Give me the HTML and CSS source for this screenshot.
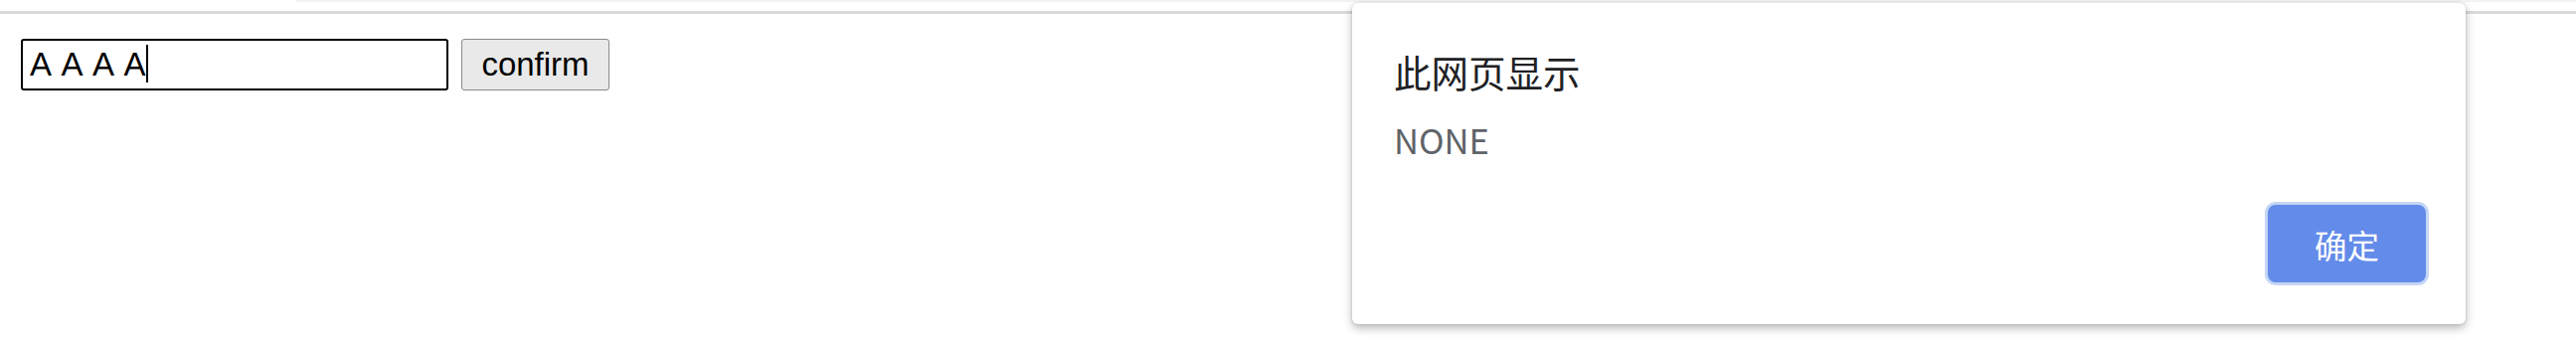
FILE: index.html
```html
<!DOCTYPE html>
<html lang="zh-CN">
<head>
<meta charset="utf-8">
<title>confirm</title>
<link rel="stylesheet" href="styles.css">
</head>
<body>
<div class="chrome">
  <div class="tabstrip"></div>
  <div class="divider"></div>
</div>
<div class="form">
  <div class="field"><span class="value">A A A A</span><span class="caret"></span></div>
  <button class="confirm" type="button">confirm</button>
</div>
<div class="dialog" role="alertdialog">
  <div class="title">此网页显示</div>
  <div class="message">NONE</div>
  <div class="actions">
    <button class="ok" type="button">确定</button>
  </div>
</div>
</body>
</html>
```
FILE: styles.css
```css
html, body {
  margin: 0;
  padding: 0;
  background: #ffffff;
  width: 2591px;
  height: 345px;
  overflow: hidden;
}

.chrome {
  display: flex;
  flex-direction: column;
}

.tabstrip {
  height: 2px;
  margin-left: 298px;
  background: #f2f2f2;
}

.divider {
  margin-top: 9px;
  height: 3px;
  background: #dadada;
}

.form {
  display: flex;
  align-items: flex-start;
  gap: 13px;
  padding: 25px 0 0 21px;
}

.field {
  box-sizing: border-box;
  width: 430px;
  height: 52px;
  border: 2px solid #000;
  border-radius: 3px;
  padding: 0 7px;
  line-height: 48px;
  font-family: "Liberation Sans", Arial, sans-serif;
  font-size: 33px;
  color: #000;
  white-space: pre;
}

.value {
  word-spacing: 4px;
  vertical-align: top;
}

.caret {
  display: inline-block;
  width: 2px;
  height: 38px;
  background: #000;
  vertical-align: top;
  margin-top: 4px;
}

.confirm {
  box-sizing: border-box;
  width: 149px;
  height: 52px;
  margin: 0;
  padding: 0;
  border: 1px solid #8a8a8a;
  border-radius: 3px;
  background: #e9e9e9;
  font-family: "Liberation Sans", Arial, sans-serif;
  font-size: 33px;
  color: #000;
}

.dialog {
  position: absolute;
  left: 1360px;
  top: 3px;
  box-sizing: border-box;
  width: 1120px;
  height: 323px;
  padding: 0 37px 0 42px;
  background: #ffffff;
  border-radius: 6px;
  box-shadow: 0 4px 10px rgba(0, 0, 0, 0.28), 0 0 3px rgba(0, 0, 0, 0.15);
  display: flex;
  flex-direction: column;
  font-family: "Noto Sans CJK SC", "Noto Sans", sans-serif;
}

.title {
  margin-top: 44px;
  height: 50px;
  line-height: 50px;
  font-size: 37.5px;
  color: #202124;
}

.message {
  margin-top: 18px;
  height: 50px;
  line-height: 50px;
  font-size: 34.5px;
  color: #5f6368;
}

.actions {
  margin-top: 38px;
  display: flex;
  justify-content: flex-end;
}

.ok {
  box-sizing: border-box;
  width: 165px;
  height: 84px;
  margin: 0;
  padding: 0;
  border: 3px solid #c4d6f6;
  border-radius: 11px;
  background: #638be9;
  color: #ffffff;
  font-family: "Noto Sans CJK SC", sans-serif;
  font-size: 32.5px;
}
```
